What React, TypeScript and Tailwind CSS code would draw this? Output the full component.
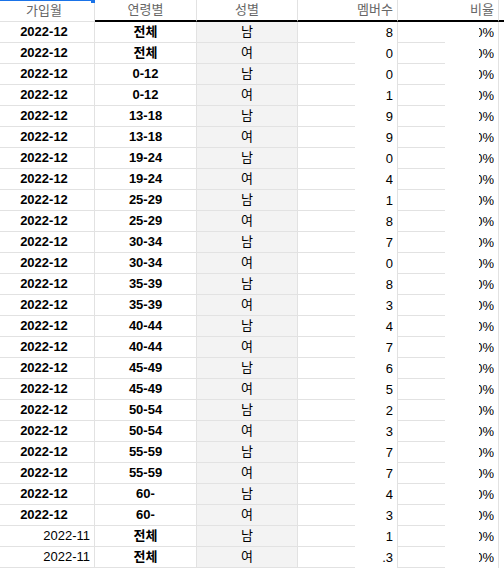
import React from 'react';

type Row = { month: string; age: string; sex: string; count: string; ratio: string };

const raw: [string, string, string, string][] = [
  ['2022-12', '전체', '남', '8'],
  ['2022-12', '전체', '여', '0'],
  ['2022-12', '0-12', '남', '0'],
  ['2022-12', '0-12', '여', '1'],
  ['2022-12', '13-18', '남', '9'],
  ['2022-12', '13-18', '여', '9'],
  ['2022-12', '19-24', '남', '0'],
  ['2022-12', '19-24', '여', '4'],
  ['2022-12', '25-29', '남', '1'],
  ['2022-12', '25-29', '여', '8'],
  ['2022-12', '30-34', '남', '7'],
  ['2022-12', '30-34', '여', '0'],
  ['2022-12', '35-39', '남', '8'],
  ['2022-12', '35-39', '여', '3'],
  ['2022-12', '40-44', '남', '4'],
  ['2022-12', '40-44', '여', '7'],
  ['2022-12', '45-49', '남', '6'],
  ['2022-12', '45-49', '여', '5'],
  ['2022-12', '50-54', '남', '2'],
  ['2022-12', '50-54', '여', '3'],
  ['2022-12', '55-59', '남', '7'],
  ['2022-12', '55-59', '여', '7'],
  ['2022-12', '60-', '남', '4'],
  ['2022-12', '60-', '여', '3'],
  ['2022-11', '전체', '남', '1'],
  ['2022-11', '전체', '여', '1.3'],
];

const rows: Row[] = raw.map(([month, age, sex, count]) => ({ month, age, sex, count, ratio: '10%' }));

export default function App() {
  return (
    <div
      className="relative w-[504px] h-[568px] overflow-hidden bg-white text-[13px] text-black"
      style={{ fontFamily: '"Liberation Sans", Arial, "Noto Sans CJK KR", sans-serif' }}
    >
      {/* selection edge from the cell above */}
      <div className="absolute left-0 top-0 h-px w-[91px] bg-[#1a73e8]" />
      <div className="absolute left-[91px] top-0 h-[3px] w-[4px] bg-[#1a73e8]" />

      {/* Header */}
      <div className="flex h-[22px] text-[#666666]">
        <div className="w-[95px] shrink-0 flex items-center justify-center pr-[6px] border-r border-b border-[#e2e2e2]">가입월</div>
        <div className="w-[102px] shrink-0 flex items-center justify-center border-r border-[#e2e2e2] border-b-2 border-b-black">연령별</div>
        <div className="w-[101px] shrink-0 flex items-center justify-center border-r border-[#e2e2e2] border-b-2 border-b-black">성별</div>
        <div className="w-[100px] shrink-0 flex items-center justify-end pr-[4px] border-r border-[#e2e2e2] border-b-2 border-b-black">멤버수</div>
        <div className="w-[101px] shrink-0 flex items-center justify-end pr-[4px] border-r border-[#e2e2e2] border-b-2 border-b-black">비율</div>
        <div className="flex-1 border-b-2 border-b-black" />
      </div>

      {/* Rows */}
      {rows.map((r, i) => {
        const bold = r.month === '2022-12';
        return (
          <div key={i} className="flex h-[21px]">
            <div
              className={
                bold
                  ? 'w-[95px] shrink-0 flex items-center justify-center pr-[6px] font-bold border-r border-b border-[#e2e2e2]'
                  : 'w-[95px] shrink-0 flex items-center justify-end pr-[4px] border-r border-b border-[#e2e2e2]'
              }
            >
              {r.month}
            </div>
            <div className="w-[102px] shrink-0 flex items-center justify-center font-bold border-r border-b border-[#e2e2e2]">{r.age}</div>
            <div className="w-[101px] shrink-0 flex items-center justify-center bg-[#f3f3f3] border-r border-b border-[#e2e2e2]">{r.sex}</div>
            <div className="w-[100px] shrink-0 flex border-r border-[#e2e2e2]">
              <div className="w-[57px] border-b border-[#e2e2e2]" />
              <div className="flex-1 flex items-center justify-end pr-[4px]">
                <span className="w-[11px] overflow-hidden flex justify-end whitespace-nowrap">{r.count}</span>
              </div>
            </div>
            <div className="w-[101px] shrink-0 flex border-r border-[#e2e2e2]">
              <div className="w-[47px] border-b border-[#e2e2e2]" />
              <div className="flex-1 flex items-center justify-end pr-[4px]">
                <span className="w-[15px] overflow-hidden flex justify-end whitespace-nowrap">{r.ratio}</span>
              </div>
            </div>
            <div className="flex-1" />
          </div>
        );
      })}
    </div>
  );
}
